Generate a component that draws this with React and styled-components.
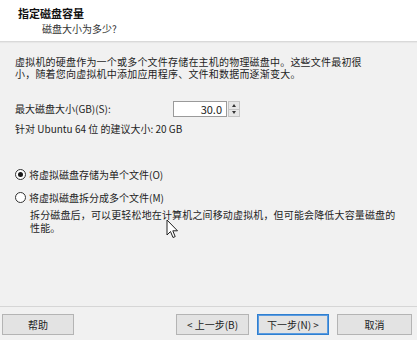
import React from "react";
import styled, { createGlobalStyle } from "styled-components";

const Global = createGlobalStyle`
  html, body { margin: 0; padding: 0; background: #f0f0f0; }
  body { font-family: "Noto Sans CJK SC", "Noto Sans", sans-serif; color: #1e1e1e; }
`;

const Window = styled.div`
  position: relative;
  width: 417px;
  height: 340px;
  display: flex;
  flex-direction: column;
  background: #f1f1f1;
  overflow: hidden;
`;

const Header = styled.div`
  background: #ffffff;
  height: 42px;
  box-sizing: border-box;
  padding: 6px 0 0 18px;
  border-bottom: 1px solid #d9d9d9;
  box-shadow: 0 1px 1px rgba(0,0,0,0.04);
`;

const Title = styled.div`
  font-size: 11px;
  line-height: 14px;
  font-weight: 700;
  color: #111;
`;

const Subtitle = styled.div`
  font-size: 10px;
  line-height: 14px;
  margin-top: 2px;
  padding-left: 24px;
  color: #333;
`;

const Body = styled.div`
  flex: 1;
  padding: 14px 15px 0 15px;
  font-size: 10px;
`;

const Para = styled.p`
  margin: 0;
  line-height: 12px;
  letter-spacing: 0.2px;
`;

const SizeRow = styled.div`
  display: flex;
  align-items: center;
  height: 18px;
  margin-top: 20px;
`;

const Label = styled.span`
  width: 158px;
  line-height: 12px;
`;

const Spin = styled.div`
  display: flex;
  height: 16px;
`;

const NumberBox = styled.div`
  width: 54px;
  height: 16px;
  box-sizing: border-box;
  background: #fff;
  border: 1px solid #9a9a9a;
  text-align: right;
  padding-right: 4px;
  font-size: 11px;
  line-height: 14px;
  color: #222;
`;

const Arrows = styled.div`
  width: 12px;
  display: flex;
  flex-direction: column;
  margin-left: 1px;
`;

const ArrowBtn = styled.div`
  flex: 1;
  background: #e6e6e6;
  border: 1px solid #c4c4c4;
  display: flex;
  align-items: center;
  justify-content: center;
  &:first-child { border-bottom: none; }
  &::after {
    content: "";
    border-left: 2.5px solid transparent;
    border-right: 2.5px solid transparent;
    ${p => p.$up ? "border-bottom: 3px solid #333;" : "border-top: 3px solid #333;"}
  }
`;

const Hint = styled.div`
  margin-top: 5px;
  line-height: 12px;
`;

const RadioRow = styled.label`
  display: flex;
  align-items: center;
  height: 14px;
  margin-top: ${p => p.$mt}px;
  margin-left: 0px;
  gap: 3px;
`;

const Circle = styled.span`
  width: 11px;
  height: 11px;
  box-sizing: border-box;
  border-radius: 50%;
  border: 1px solid #333;
  background: #fff;
  display: flex;
  align-items: center;
  justify-content: center;
  &::after {
    content: "";
    width: 5px;
    height: 5px;
    border-radius: 50%;
    background: ${p => p.$on ? "#1a1a1a" : "transparent"};
  }
`;

const Desc = styled.p`
  margin: 4px 0 0 15px;
  line-height: 13px;
  letter-spacing: 0.15px;
`;

const Footer = styled.div`
  height: 34px;
  box-sizing: border-box;
  border-top: 1px solid #d6d6d6;
  padding: 7px 5px 0 2px;
  display: flex;
  justify-content: space-between;
  align-items: flex-start;
`;

const Group = styled.div`
  display: flex;
  gap: 8px;
`;

const Button = styled.button`
  width: ${p => p.$w || 73}px;
  height: 21px;
  box-sizing: border-box;
  background: #e3e3e3;
  border: 1px solid ${p => p.$primary ? "#2f7fd0" : "#b4b4b4"};
  box-shadow: ${p => p.$primary ? "inset 0 0 0 1px #5a9be0" : "none"};
  font-family: "Noto Sans CJK SC", "Noto Sans", sans-serif;
  font-size: 10px;
  color: #222;
  padding: 0;
  line-height: 18px;
`;

const Cursor = styled.svg`
  position: absolute;
  left: 166px;
  top: 219px;
`;

export default function App() {
  return (
    <>
      <Global />
      <Window>
        <Header>
          <Title>指定磁盘容量</Title>
          <Subtitle>磁盘大小为多少?</Subtitle>
        </Header>
        <Body>
          <Para>
            虚拟机的硬盘作为一个或多个文件存储在主机的物理磁盘中。这些文件最初很
            <br />
            小，随着您向虚拟机中添加应用程序、文件和数据而逐渐变大。
          </Para>
          <SizeRow>
            <Label>最大磁盘大小(GB)(S):</Label>
            <Spin>
              <NumberBox>30.0</NumberBox>
              <Arrows>
                <ArrowBtn $up />
                <ArrowBtn />
              </Arrows>
            </Spin>
          </SizeRow>
          <Hint>针对 Ubuntu 64 位 的建议大小: 20 GB</Hint>
          <RadioRow $mt={32}>
            <Circle $on />
            <span>将虚拟磁盘存储为单个文件(O)</span>
          </RadioRow>
          <RadioRow $mt={9}>
            <Circle />
            <span>将虚拟磁盘拆分成多个文件(M)</span>
          </RadioRow>
          <Desc>
            拆分磁盘后，可以更轻松地在计算机之间移动虚拟机，但可能会降低大容量磁盘的
            <br />
            性能。
          </Desc>
        </Body>
        <Footer>
          <Button $w={72}>帮助</Button>
          <Group>
            <Button>&lt; 上一步(B)</Button>
            <Button $primary $w={72}>下一步(N) &gt;</Button>
            <Button $w={75}>取消</Button>
          </Group>
        </Footer>
        <Cursor width="13" height="20" viewBox="0 0 13 20">
          <path d="M1 1 L1 16 L4.5 12.5 L7 18.5 L9.2 17.6 L6.8 11.8 L11.5 11.8 Z" fill="#fff" stroke="#222" strokeWidth="1" strokeLinejoin="round" />
        </Cursor>
      </Window>
    </>
  );
}
